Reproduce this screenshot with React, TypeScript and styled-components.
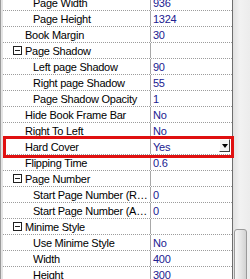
import React from "react";
import styled, { createGlobalStyle } from "styled-components";

interface IRow {
  label: string;
  value?: string;
  level: 1 | 2;
  category?: boolean;
  dropdown?: boolean;
}

const rows: Array<IRow> = [
  { label: "Page Width", value: "936", level: 2 },
  { label: "Page Height", value: "1324", level: 2 },
  { label: "Book Margin", value: "30", level: 1 },
  { label: "Page Shadow", level: 1, category: true },
  { label: "Left page Shadow", value: "90", level: 2 },
  { label: "Right page Shadow", value: "55", level: 2 },
  { label: "Page Shadow Opacity", value: "1", level: 2 },
  { label: "Hide Book Frame Bar", value: "No", level: 1 },
  { label: "Right To Left", value: "No", level: 1 },
  { label: "Hard Cover", value: "Yes", level: 1, dropdown: true },
  { label: "Flipping Time", value: "0.6", level: 1 },
  { label: "Page Number", level: 1, category: true },
  { label: "Start Page Number (Right)", value: "0", level: 2 },
  { label: "Start Page Number (All Pages)", value: "0", level: 2 },
  { label: "Minime Style", level: 1, category: true },
  { label: "Use Minime Style", value: "No", level: 2 },
  { label: "Width", value: "400", level: 2 },
  { label: "Height", value: "300", level: 2 }
];

const ROW_H = 16;
const SCROLL_OFFSET = 5;

const App = () => {
  const hardCoverIndex = rows.findIndex(r => r.dropdown);
  return (
    <>
      <GlobalStyle />
      <Frame>
        <Grid>
          <List>
            {rows.map((r, i) => (
              <Row key={i.toString()}>
                <NameCell level={r.level}>
                  {r.category && <Toggle />}
                  <Label>{r.label}</Label>
                </NameCell>
                <ValueCell>
                  {r.value}
                  {r.dropdown && (
                    <DropButton>
                      <Arrow />
                    </DropButton>
                  )}
                </ValueCell>
              </Row>
            ))}
          </List>
          <Highlight style={{ top: hardCoverIndex * ROW_H - SCROLL_OFFSET - 3 }} />
        </Grid>
        <ScrollBar>
          <Thumb />
        </ScrollBar>
      </Frame>
    </>
  );
};

const GlobalStyle = createGlobalStyle`
  html, body {
    margin: 0;
    padding: 0;
    background: #ffffff;
    overflow: hidden;
  }
`;

const Frame = styled.div`
  display: flex;
  width: 250px;
  height: 279px;
  overflow: hidden;
  font-family: "Liberation Sans", Arial, sans-serif;
  font-size: 11px;
  letter-spacing: -0.25px;
`;

const Grid = styled.div`
  position: relative;
  flex: 1;
  background: #ffffff;
  border-left: 1px solid #9a9a9a;
  box-shadow: inset 2px 0 0 #e4e4e4;
  border-right: 1px solid #6e6e6e;
`;

const List = styled.div`
  margin-top: -${SCROLL_OFFSET}px;
  padding-left: 2px;
`;

const Row = styled.div`
  display: grid;
  grid-template-columns: 148px 1fr;
  height: ${ROW_H}px;
  box-sizing: border-box;
  border-bottom: 1px dotted #9c9c9c;
`;

const NameCell = styled.div<{ level: 1 | 2 }>`
  display: flex;
  align-items: center;
  position: relative;
  padding-left: ${props => (props.level === 2 ? 30 : 22)}px;
  border-right: 1px solid #a8a8a8;
  color: #000000;
  overflow: hidden;
  min-width: 0;
`;

const Label = styled.span`
  white-space: nowrap;
  overflow: hidden;
  text-overflow: ellipsis;
  padding-right: 1px;
`;

const Toggle = styled.span`
  position: absolute;
  left: 10px;
  top: 3px;
  width: 7px;
  height: 7px;
  border: 1px solid #202020;
  background: #ffffff;
  &::after {
    content: "";
    position: absolute;
    left: 1px;
    right: 1px;
    top: 3px;
    height: 1px;
    background: #202020;
  }
`;

const ValueCell = styled.div`
  display: flex;
  align-items: center;
  position: relative;
  padding-left: 2px;
  color: #202090;
`;

const DropButton = styled.span`
  position: absolute;
  right: 2px;
  top: 0;
  width: 11px;
  height: 13px;
  box-sizing: border-box;
  background: #f4f4f4;
  border: 1px solid;
  border-color: #ffffff #3c3c3c #3c3c3c #ffffff;
  display: flex;
  align-items: center;
  justify-content: center;
`;

const Arrow = styled.span`
  width: 0;
  height: 0;
  border-left: 3px solid transparent;
  border-right: 3px solid transparent;
  border-top: 4px solid #000000;
`;

const Highlight = styled.div`
  position: absolute;
  z-index: 2;
  left: 2px;
  right: -2px;
  height: 22px;
  box-sizing: border-box;
  border: 3px solid #e01010;
  pointer-events: none;
`;

const ScrollBar = styled.div`
  position: relative;
  width: 17px;
  background: linear-gradient(to right, #e2e2e2, #f2f2f2 40%, #ececec);
`;

const Thumb = styled.div`
  position: absolute;
  left: 1px;
  right: 3px;
  top: 229px;
  bottom: -6px;
  border: 1px solid #9a9a9a;
  border-radius: 3px;
  background: linear-gradient(to right, #f6f6f6, #e6e6e6 50%, #d2d2d2);
`;

export default App;
